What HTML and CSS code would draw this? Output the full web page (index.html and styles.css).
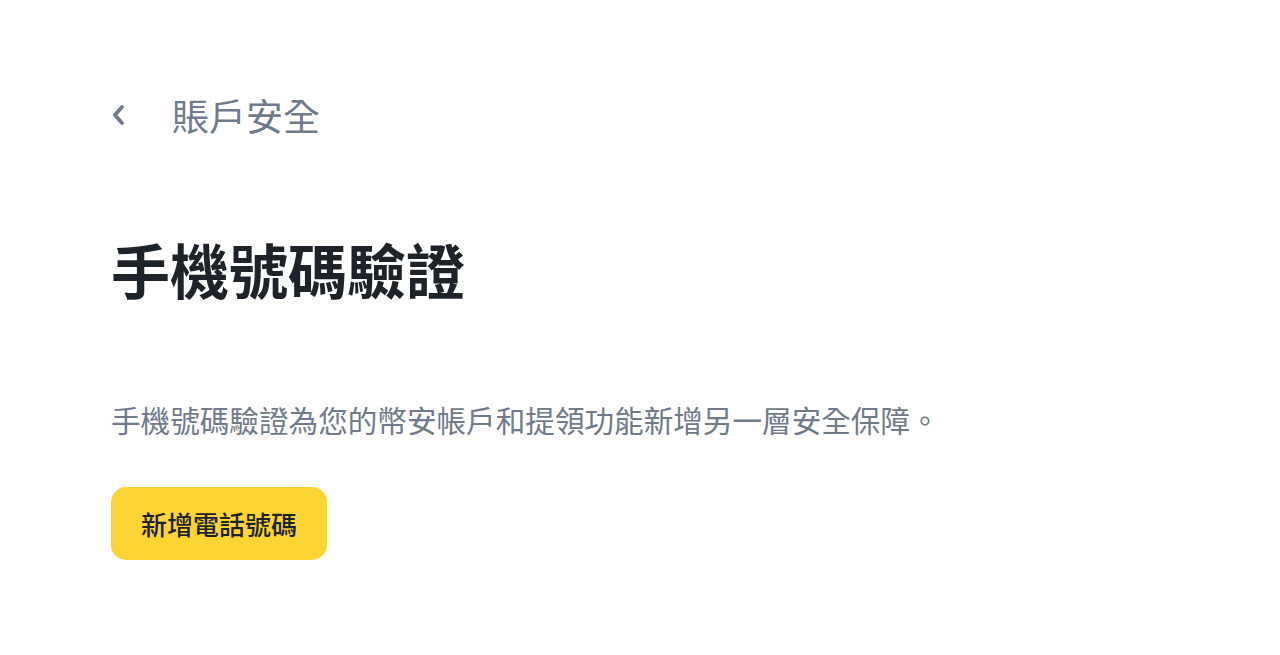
FILE: index.html
```html
<!DOCTYPE html>
<html lang="zh-Hant">
<head>
<meta charset="utf-8">
<link rel="stylesheet" href="styles.css">
</head>
<body>
<main class="page">
  <div class="header">
    <span class="back">
      <svg width="14" height="22" viewBox="0 0 14 22"><path d="M11 3 L4 11 L11 19" fill="none" stroke="#707A8A" stroke-width="3.8" stroke-linecap="round" stroke-linejoin="round"/></svg>
    </span>
    <span class="header-title">賬戶安全</span>
  </div>
  <h1 class="title">手機號碼驗證</h1>
  <p class="desc">手機號碼驗證為您的幣安帳戶和提領功能新增另一層安全保障。</p>
  <button class="btn">新增電話號碼</button>
</main>
</body>
</html>
```
FILE: styles.css
```css
html, body { margin: 0; padding: 0; background: #fff; }
body { font-family: "Noto Sans CJK TC", "Noto Sans", sans-serif; }
.page {
  display: flex;
  flex-direction: column;
  align-items: flex-start;
  padding: 89px 0 0 111px;
}
.header {
  display: flex;
  align-items: center;
  height: 52px;
}
.back {
  display: flex;
  width: 61px;
  height: 22px;
  align-items: center;
}
.header-title {
  font-size: 37px;
  line-height: 52px;
  color: #707A8A;
  font-weight: 400;
}
.title {
  margin: 89px 0 0 0;
  font-size: 59px;
  line-height: 78px;
  font-weight: 700;
  color: #1E2329;
}
.desc {
  margin: 90px 0 0 0;
  font-size: 29.6px;
  line-height: 44px;
  color: #707A8A;
  font-weight: 400;
}
.btn {
  margin-top: 45px;
  height: 73px;
  padding: 0 30px;
  border: none;
  border-radius: 15px;
  background: #FCD535;
  color: #1E2329;
  font-family: "Noto Sans CJK TC", "Noto Sans", sans-serif;
  font-size: 26px;
  font-weight: 500;
}
```
